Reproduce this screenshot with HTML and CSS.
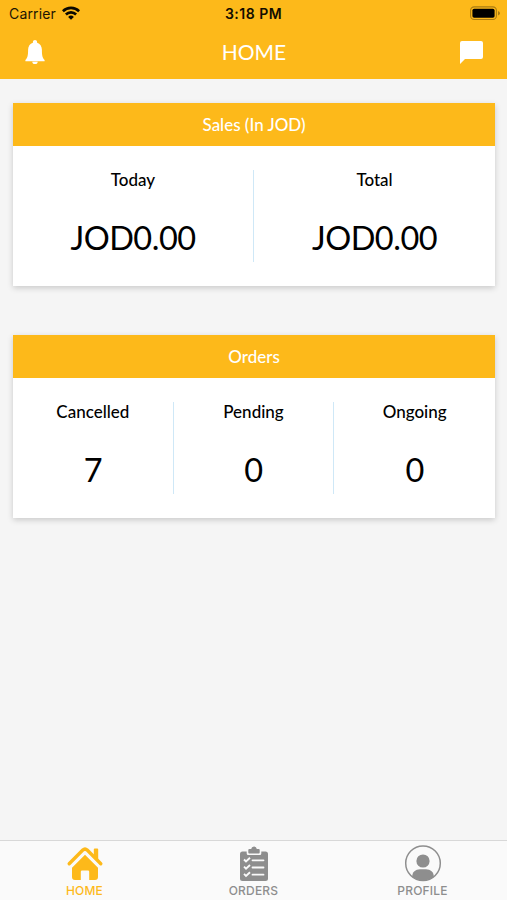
FILE: index.html
```html
<!DOCTYPE html>
<html lang="en">
<head>
<meta charset="utf-8">
<title>Home</title>
<link rel="stylesheet" href="styles.css">
</head>
<body>
<header class="top">
  <div class="status">
    <div class="carrier"><span>Carrier</span>
      <svg width="18" height="14" viewBox="0 0 18 14" fill="none" stroke="#0c0900" stroke-width="2.6"><path d="M.9 5.2a11.6 11.6 0 0 1 16.2 0M3.9 8.5a7.2 7.2 0 0 1 10.2 0"/><path d="M9 13.8L6.1 10.9a4.1 4.1 0 0 1 5.8 0z" fill="#0c0900" stroke="none"/></svg>
    </div>
    <span class="time">3:18 PM</span>
    <svg class="battery" width="31" height="15" viewBox="0 0 31 15"><rect x=".6" y=".9" width="25.8" height="12.6" rx="3.6" fill="none" stroke="#a97c12" stroke-width="1.1"/><rect x="2.4" y="2.7" width="22.2" height="9" rx="1.8" fill="#000"/><path d="M28 5v4.4q2-.7 2-2.2T28 5z" fill="#a97c12"/></svg>
  </div>
  <div class="nav">
    <svg class="bell" width="20" height="25" viewBox="0 0 20 25" fill="#fff"><path d="M10 0c1.2 0 2.1.9 2.1 2.1v.7c3 .9 4.8 3.7 4.8 7 0 5.500.5 8.200 2.700 10.300v1.100H.4v-1.100c2.200-2.100 2.700-4.800 2.700-10.300 0-3.300 1.800-6.100 4.800-7v-.7C7.900.9 8.800 0 10 0zM7.300 21.800h5.400a2.700 2.300 0 0 1-5.400 0z"/></svg>
    <h1>HOME</h1>
    <svg class="chat" width="23" height="23" viewBox="0 0 23 23" fill="#fff"><path d="M2 0h19a2 2 0 0 1 2 2v14a2 2 0 0 1-2 2H5L0 23V2a2 2 0 0 1 2-2z"/></svg>
  </div>
</header>
<main>
  <section class="card">
    <h2>Sales (In JOD)</h2>
    <div class="stats">
      <div class="stat"><h3>Today</h3><p>JOD0.00</p></div>
      <div class="stat"><h3>Total</h3><p>JOD0.00</p></div>
    </div>
  </section>
  <section class="card">
    <h2>Orders</h2>
    <div class="stats three">
      <div class="stat"><h3>Cancelled</h3><p>7</p></div>
      <div class="stat"><h3>Pending</h3><p>0</p></div>
      <div class="stat"><h3>Ongoing</h3><p>0</p></div>
    </div>
  </section>
</main>
<footer class="tabs">
  <div class="tab active">
    <svg width="38" height="38" viewBox="0 0 38 38"><path d="M3.200 18.700L16.800 5.100q2.200-2 4.400 0L34.800 18.700" fill="none" stroke="#fdb91a" stroke-width="3.400" stroke-linecap="round"/><path d="M27.800 4.500q0-1 1-1h2.400q1 0 1 1v11l-4.400-4.400z" fill="#fdb91a"/><path d="M19 9.700L32 22.700v9.300q0 3-3 3h-5.800v-8.300q0-1.200-1.200-1.200h-6q-1.200 0-1.200 1.200V35H9q-3 0-3-3v-9.300z" fill="#fdb91a"/></svg>
    <span>HOME</span>
  </div>
  <div class="tab">
    <svg width="38" height="38" viewBox="0 0 38 38"><path d="M7.500 6.500h4.200v2q0 1.500 1.500 1.500h11.600q1.500 0 1.500-1.500v-2h4.200q2.500 0 2.500 2.500v24.500q0 2.500-2.500 2.500h-23Q5 36 5 33.500V9q0-2.500 2.500-2.500z" fill="#8e8e8e"/><path d="M13.300 5q0-1 1-1h1.900q.3-2.600 2.800-2.600T21.800 4h1.900q1 0 1 1v2.600q0 1-1 1h-9.400q-1 0-1-1z" fill="#8e8e8e"/><path d="M17.500 15.300h11M17.500 22.500h11M17.500 29.700h11" stroke="#fafafa" stroke-width="1.800" stroke-linecap="round"/><path d="M9 14.500l2 2 4-3.700M9 21.700l2 2 4-3.700M9 28.900l2 2 4-3.700" fill="none" stroke="#fafafa" stroke-width="1.900"/></svg>
    <span>ORDERS</span>
  </div>
  <div class="tab">
    <svg width="38" height="38" viewBox="0 0 38 38"><circle cx="19" cy="18.200" r="17.300" fill="none" stroke="#8e8e8e" stroke-width="1.500"/><circle cx="19" cy="16" r="6.600" fill="#8e8e8e"/><path d="M8.200 31.700C8.200 27 11.500 24.200 16 24.200h6c4.500 0 7.800 2.800 7.800 7.500A17.300 17.300 0 0 1 8.200 31.700z" fill="#8e8e8e"/></svg>
    <span>PROFILE</span>
  </div>
</footer>
</body>
</html>
```
FILE: styles.css
```css
* { box-sizing: border-box; }
body {
  margin: 0;
  height: 900px;
  display: flex;
  flex-direction: column;
  overflow: hidden;
  background: #f5f5f5;
  font-family: Lato, sans-serif;
}
h1, h2, h3, p { margin: 0; }
svg { display: block; flex: none; }
.top {
  height: 79.4px;
  background: #fdb91a;
}
.status {
  height: 27px;
  display: grid;
  grid-template-columns: 1fr auto 1fr;
  align-items: center;
  padding: 0 6px 0 9px;
  font: 14px/27px Inter, sans-serif;
  color: #1c1503;
}
.carrier { display: flex; align-items: center; gap: 6px; letter-spacing: .15px; }
.carrier svg { margin-top: -2px; }
.time { font-weight: 600; color: #120d00; letter-spacing: .5px; margin-left: -3px; }
.battery { justify-self: end; }
.nav {
  height: 50px;
  display: grid;
  grid-template-columns: 1fr auto 1fr;
  align-items: center;
  padding: 0 24px 0 25px;
}
.nav h1 { font-size: 21px; font-weight: 400; line-height: 50px; color: #fff; }
.chat { justify-self: end; }
main {
  flex: 1;
  padding: 24px 12px 0 13px;
  display: flex;
  flex-direction: column;
  gap: 49px;
}
.card { background: #fff; box-shadow: 0 2px 6px rgba(0, 0, 0, .18); height: 183px; }
.card h2 {
  height: 43px;
  background: #fdb91a;
  color: #fff;
  font-size: 17px;
  font-weight: 500;
  line-height: 43px;
  text-align: center;
}
.stats { display: grid; grid-template-columns: 1fr 1fr; padding: 24px 0; }
.three { grid-template-columns: 1fr 1fr 1fr; }
.stat { height: 92px; text-align: center; border-right: 1px solid #cfe8f7; }
.stat:last-child { border-right: 0; }
.stat h3 { font-size: 17px; font-weight: 500; line-height: 20px; color: #000; }
.stat p { margin-top: 27px; font-size: 32.5px; letter-spacing: -.5px; line-height: 42px; color: #000; }
.tabs {
  height: 60px;
  display: grid;
  grid-template-columns: repeat(3, 1fr);
  background: #fafafa;
  border-top: 1px solid #d8d8d8;
}
.tab {
  display: flex;
  flex-direction: column;
  align-items: center;
  padding-top: 4px;
  color: #8e8e8e;
  font: 500 12px/16px Inter, sans-serif;
  letter-spacing: .2px;
}
.active { color: #fdb91a; }
```
